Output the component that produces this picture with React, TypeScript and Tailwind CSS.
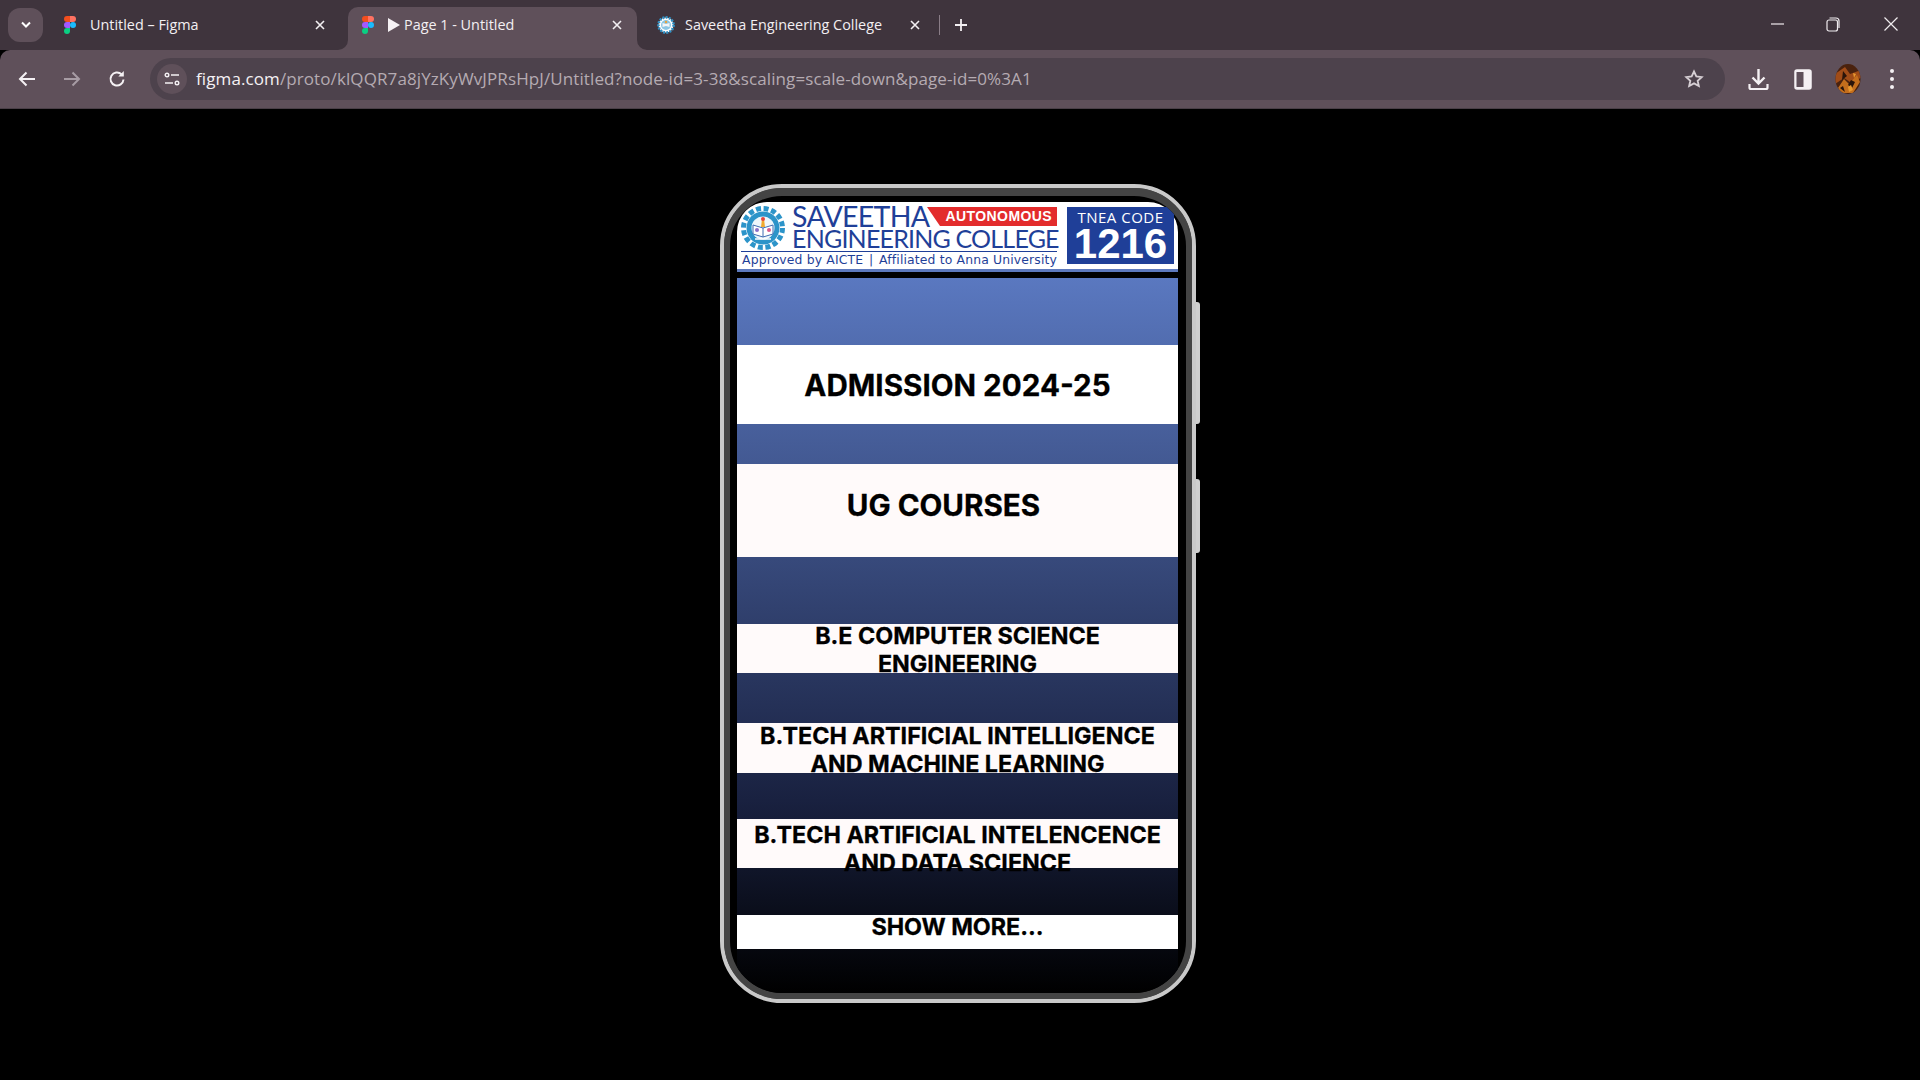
import React from "react";

const UI = "font-['Open_Sans','Noto_Sans',sans-serif]";

function FigmaLogo() {
  return (
    <svg width="12" height="18" viewBox="0 0 12 18" className="shrink-0">
      <path d="M3 18a3 3 0 0 0 3-3v-3H3a3 3 0 0 0 0 6z" fill="#0acf83" />
      <path d="M0 9a3 3 0 0 1 3-3h3v6H3a3 3 0 0 1-3-3z" fill="#a259ff" />
      <path d="M0 3a3 3 0 0 1 3-3h3v6H3a3 3 0 0 1-3-3z" fill="#f24e1e" />
      <path d="M6 0h3a3 3 0 0 1 0 6H6z" fill="#ff7262" />
      <circle cx="9" cy="9" r="3" fill="#1abcfe" />
    </svg>
  );
}

function CloseX({ className = "" }: { className?: string }) {
  return (
    <svg width="10" height="10" viewBox="0 0 10 10" className={`shrink-0 ${className}`}>
      <path d="M1 1l8 8M9 1l-8 8" stroke="#f3eff2" strokeWidth="1.6" fill="none" />
    </svg>
  );
}

function Favicon() {
  return (
    <svg width="18" height="18" viewBox="0 0 18 18" className="shrink-0">
      <circle cx="9" cy="9" r="7.6" fill="#fff" stroke="#2f8fc4" strokeWidth="2.6" strokeDasharray="2 1.2" />
      <circle cx="9" cy="9" r="5" fill="#8cc6e4" />
      <path d="M5.5 11l3.5-1 3.5 1V7L9 8 5.5 7z" fill="#f5f5f5" />
      <circle cx="9" cy="6" r="1.2" fill="#e8a23c" />
    </svg>
  );
}

function Gear() {
  return (
    <svg width="44" height="44" viewBox="0 0 44 44" className="shrink-0">
      <circle cx="22" cy="22" r="19.5" fill="none" stroke="#2c94c9" strokeWidth="5" strokeDasharray="5 2.66" />
      <circle cx="22" cy="22" r="16.5" fill="#2c94c9" />
      <circle cx="22" cy="22" r="11.5" fill="#eef6fb" />
      <path d="M12 19l10 3 10-3v9l-10 3-10-3z" fill="#fff" stroke="#3f6db2" strokeWidth="1" />
      <path d="M22 22v9" stroke="#3f6db2" strokeWidth="1" />
      <path d="M21 13h2l1 8h-4z" fill="#f0a92f" />
      <circle cx="22" cy="13" r="2" fill="#e6463a" />
      <circle cx="16" cy="24" r="2" fill="#8a6fc9" />
      <circle cx="28" cy="24" r="2" fill="#d85a8e" />
      <path d="M14 33h16" stroke="#fff" strokeWidth="1.5" />
    </svg>
  );
}

function Avatar() {
  return (
    <svg width="26" height="30" viewBox="0 0 26 30" className="shrink-0">
      <defs>
        <clipPath id="av">
          <ellipse cx="13" cy="15" rx="12.5" ry="15" />
        </clipPath>
      </defs>
      <g clipPath="url(#av)">
        <rect width="26" height="30" fill="#4a220e" />
        <path d="M0 10L10 3l5 7 11-4v8L15 18l-6-4-9 6z" fill="#a04c18" />
        <path d="M3 24l6-9 5 5 8-9 3 7-7 11H6z" fill="#c46e1c" />
        <path d="M8 7l4 5-5 4zM16 16l4 2-3 6-4-3zM5 24l3-2 2 6z" fill="#2a140a" />
        <path d="M13 23l3-2 2 5-4 2zM18 9l3 1-2 4z" fill="#e8982f" />
      </g>
    </svg>
  );
}

function Tab({ children, w }: { children: React.ReactNode; w: string }) {
  return <div className={`flex items-center h-[42px] pb-[8px] shrink-0 ${w}`}>{children}</div>;
}

function Foot({ side }: { side: "l" | "r" }) {
  return (
    <svg
      width="10"
      height="10"
      viewBox="0 0 10 10"
      className={side === "l" ? "absolute bottom-0 -left-[10px]" : "absolute bottom-0 -right-[10px]"}
    >
      <path d={side === "l" ? "M10 0v10H0a10 10 0 0 0 10-10z" : "M0 0v10h10A10 10 0 0 1 0 0z"} fill="#5f505a" />
    </svg>
  );
}

function Browser() {
  return (
    <div className={`${UI} shrink-0`}>
      <div className="h-[50px] bg-[#3f343d] flex items-end relative">
        <div className="absolute left-[8px] top-[8px] w-[35px] h-[34px] rounded-[12px] bg-[#5f505a] flex items-center justify-center">
          <svg width="12" height="8" viewBox="0 0 12 8">
            <path d="M2 1.5l4 4 4-4" stroke="#fff" strokeWidth="2" fill="none" />
          </svg>
        </div>
        <div className="flex items-end pl-[64px] w-full">
          <Tab w="w-[284px]">
            <FigmaLogo />
            <span className="ml-[14px] text-[14.4px] text-[#f3eff2] whitespace-nowrap">Untitled – Figma</span>
            <CloseX className="ml-auto mr-[23px]" />
          </Tab>
          <div className="relative w-[289px] h-[43px] shrink-0 rounded-t-[10px] bg-[#5f505a] flex items-center pl-[14px] pb-[8px]">
            <Foot side="l" />
            <Foot side="r" />
            <FigmaLogo />
            <svg width="12" height="14" viewBox="0 0 12 14" className="ml-[14px] shrink-0">
              <path d="M0 0l12 7-12 7z" fill="#f5f1f4" />
            </svg>
            <span className="ml-[4px] text-[14.4px] text-[#f3eff2] whitespace-nowrap">Page 1 - Untitled</span>
            <CloseX className="ml-auto mr-[15px]" />
          </div>
          <Tab w="w-[340px] pl-[20px]">
            <Favicon />
            <span className="ml-[10px] text-[14.4px] text-[#f3eff2] whitespace-nowrap">Saveetha Engineering College</span>
            <CloseX className="ml-[28px]" />
            <div className="w-px h-[20px] bg-[#8a7d87] ml-[19px] shrink-0" />
            <svg width="14" height="14" viewBox="0 0 14 14" className="ml-[14px] shrink-0">
              <path d="M7 1v12M1 7h12" stroke="#f3eff2" strokeWidth="1.8" />
            </svg>
          </Tab>
        </div>
        <div className="absolute right-0 top-[14px] flex items-center h-[20px]">
          <svg width="14" height="2" viewBox="0 0 14 2" className="mr-[41px]">
            <path d="M0 1h13" stroke="#f0ecef" strokeWidth="1.2" />
          </svg>
          <svg width="14" height="15" viewBox="0 0 14 15" className="mr-[44px]">
            <rect x="1" y="3" width="10.5" height="11" rx="2" fill="none" stroke="#f0ecef" strokeWidth="1.2" />
            <path d="M3.5 1H10a3 3 0 0 1 3 3v7" fill="none" stroke="#f0ecef" strokeWidth="1.2" />
          </svg>
          <svg width="14" height="14" viewBox="0 0 14 14" className="mr-[22px]">
            <path d="M.5.5l13 13M13.5.5l-13 13" stroke="#f0ecef" strokeWidth="1.2" />
          </svg>
        </div>
      </div>
      <div className="h-[59px] bg-[#5f505a] rounded-t-[10px] flex items-center relative pb-[1px] border-b border-[#4a3f47]">
        <div className="w-[150px] flex items-center shrink-0 pl-[18px] gap-[27px]">
          <svg width="18" height="16" viewBox="0 0 18 16">
            <path d="M17 8H2M8.5 1.5L2 8l6.5 6.5" stroke="#f5f1f4" strokeWidth="2" fill="none" />
          </svg>
          <svg width="18" height="16" viewBox="0 0 18 16">
            <path d="M1 8h15M9.5 1.500L16 8l-6.500 6.500" stroke="#a79ca4" strokeWidth="2" fill="none" />
          </svg>
          <svg width="18" height="18" viewBox="0 0 18 18">
            <path d="M15.500 9.500a6.500 6.500 0 1 1-2-5.200" stroke="#f5f1f4" strokeWidth="2" fill="none" />
            <path d="M15.800 1v5.500h-5.500z" fill="#f5f1f4" />
          </svg>
        </div>
        <div className="w-[1575px] h-[42px] rounded-full bg-[#4d424c] flex items-center pl-[7px] shrink-0">
          <div className="w-[30px] h-[30px] rounded-full bg-[#5f505a] flex items-center justify-center shrink-0">
            <svg width="16" height="14" viewBox="0 0 16 14">
              <circle cx="3" cy="3" r="1.800" fill="none" stroke="#f5f1f4" strokeWidth="1.400" />
              <path d="M7 3h8M1 11h8" stroke="#f5f1f4" strokeWidth="1.600" />
              <circle cx="13" cy="11" r="1.800" fill="none" stroke="#f5f1f4" strokeWidth="1.400" />
            </svg>
          </div>
          <span className="ml-[9px] pt-px text-[17px] tracking-[0.1px] whitespace-nowrap text-[#b5abb2]">
            <span className="text-[#f5f1f4]">figma.com</span>/proto/klQQR7a8jYzKyWvJPRsHpJ/Untitled?node-id=3-38&amp;scaling=scale-down&amp;page-id=0%3A1
          </span>
          <svg width="20" height="20" viewBox="0 0 24 24" className="ml-auto mr-[21px] shrink-0">
            <path d="M12 3l2.800 6 6.400.7-4.800 4.400 1.400 6.400L12 17.300l-5.800 3.200 1.400-6.400L2.800 9.700 9.200 9z" fill="none" stroke="#d6cfd4" strokeWidth="2.200" />
          </svg>
        </div>
        <div className="absolute right-0 top-0 h-full flex items-center">
          <svg width="21" height="23" viewBox="0 0 21 23" className="mr-[25px]">
            <path d="M10.500 1v14M4.500 9.500l6 6 6-6" stroke="#f5f1f4" strokeWidth="2.400" fill="none" />
            <path d="M1.500 16v3.500a1.500 1.500 0 0 0 1.500 1.500h15a1.500 1.500 0 0 0 1.500-1.500V16" stroke="#f5f1f4" strokeWidth="2.200" fill="none" />
          </svg>
          <svg width="18" height="21" viewBox="0 0 18 21" className="mr-[23px]">
            <rect x="1" y="1" width="16" height="19" rx="2" fill="#f5f1f4" stroke="#f5f1f4" strokeWidth="1.500" />
            <rect x="2.500" y="3" width="7" height="15" fill="#5f505a" />
          </svg>
          <Avatar />
          <svg width="6" height="22" viewBox="0 0 6 22" className="ml-[28px] mr-[25px]">
            <circle cx="3" cy="3" r="2" fill="#f5f1f4" />
            <circle cx="3" cy="11" r="2" fill="#f5f1f4" />
            <circle cx="3" cy="19" r="2" fill="#f5f1f4" />
          </svg>
        </div>
      </div>
    </div>
  );
}

function Header() {
  return (
    <div className="h-[70px] bg-white rounded-t-[30px] border-b-[3px] border-[#5d79bd] flex font-['Open_Sans',sans-serif] shrink-0">
      <div className="w-[330px] shrink-0 pl-[4px] pt-[3px] text-[#1f3f98]">
        <div className="flex h-[45px]">
          <div className="pt-[1px]">
            <Gear />
          </div>
          <div className="w-[265px] ml-[7px] shrink-0">
            <div className="flex items-start h-[23px]">
              <span className="text-[28.5px] leading-[23px] font-['Lato',sans-serif] tracking-[-0.7px] whitespace-nowrap w-[135px] shrink-0">SAVEETHA</span>
              <div className="w-[130px] h-[19px] mt-[2px] shrink-0 bg-[#e32c2c] [clip-path:polygon(0_0,100%_0,100%_100%,10%_100%)] text-white text-[14px] leading-[19px] font-bold text-right pr-[5px] tracking-[0.4px] font-['Liberation_Sans',sans-serif]">
                AUTONOMOUS
              </div>
            </div>
            <div className="text-[25px] leading-[20px] font-['Lato',sans-serif] whitespace-nowrap tracking-[-0.8px]">ENGINEERING COLLEGE</div>
          </div>
        </div>
        <div className="h-px bg-[#1f3f98] w-[316px] mt-[1px]" />
        <div className="flex justify-between w-[316px] pl-[1px] pt-px font-['DejaVu_Sans',sans-serif] text-[12.4px] leading-[14px] whitespace-nowrap tracking-[0.15px]">
          <span>Approved by AICTE</span>
          <span>|</span>
          <span>Affiliated to Anna University</span>
        </div>
      </div>
      <div className="mt-[5px] w-[107px] h-[57px] bg-[#1f3f98] text-white text-center shrink-0">
        <div className="text-[15px] leading-[17px] pt-[2px] tracking-[0.5px]">TNEA CODE</div>
        <div className="text-[42px] leading-[36px] font-bold font-['Liberation_Sans',sans-serif]">1216</div>
      </div>
    </div>
  );
}

function Row({ children, cls, inner = "" }: { children: React.ReactNode; cls: string; inner?: string }) {
  return (
    <div className={`bg-[#fffafa] text-black text-center font-bold text-[23.3px] leading-[28px] font-['Inter',sans-serif] [-webkit-text-stroke:0.3px_black] shrink-0 ${cls}`}>
      <div className={inner}>{children}</div>
    </div>
  );
}

function Phone() {
  return (
    <div className="relative w-[476px] h-[819px] shrink-0">
      <div className="absolute -right-[4px] top-[118px] w-[5px] h-[122px] bg-[#cfcfcf] rounded-r-[3px]" />
      <div className="absolute -right-[4px] top-[295px] w-[5px] h-[74px] bg-[#cfcfcf] rounded-r-[3px]" />
      <div className="relative w-full h-full rounded-[62px] border-[4px] border-[#c9c9c9] bg-[#444]">
        <div className="w-full h-full rounded-[58px] border-[6px] border-[#444] border-t-[8px] bg-black overflow-hidden pt-[6px] pl-[7px] pr-[8px] flex flex-col">
          <Header />
          <div className="mt-[6px] flex-1 bg-linear-to-b/srgb from-[#5a78c0] via-[#192140] via-[73%] to-black flex flex-col">
            <Row cls="mt-[67px] h-[79px] !bg-white" inner="text-[29.6px] leading-[36px] pt-[22px]">
              ADMISSION 2024-25
            </Row>
            <Row cls="mt-[40px] h-[93px]" inner="text-[29.6px] leading-[36px] pt-[23px] pr-[28px]">
              UG COURSES
            </Row>
            <Row cls="mt-[67px] h-[49px]" inner="-mt-[2px] relative">
              B.E COMPUTER SCIENCE<br />ENGINEERING
            </Row>
            <Row cls="mt-[50px] h-[50px]" inner="-mt-[1px] relative">
              B.TECH ARTIFICIAL INTELLIGENCE<br />AND MACHINE LEARNING
            </Row>
            <Row cls="mt-[46px] h-[49px]" inner="pt-[2px] relative">
              B.TECH ARTIFICIAL INTELENCENCE<br />AND DATA SCIENCE
            </Row>
            <Row cls="mt-[47px] h-[34px] !bg-white" inner="-mt-[2px]">
              SHOW MORE...
            </Row>
          </div>
        </div>
      </div>
    </div>
  );
}

export default function App() {
  return (
    <div className="w-full h-screen bg-black flex flex-col overflow-hidden">
      <Browser />
      <div className="flex-1 flex justify-center items-start pt-[75px] pr-[4px]">
        <Phone />
      </div>
    </div>
  );
}
